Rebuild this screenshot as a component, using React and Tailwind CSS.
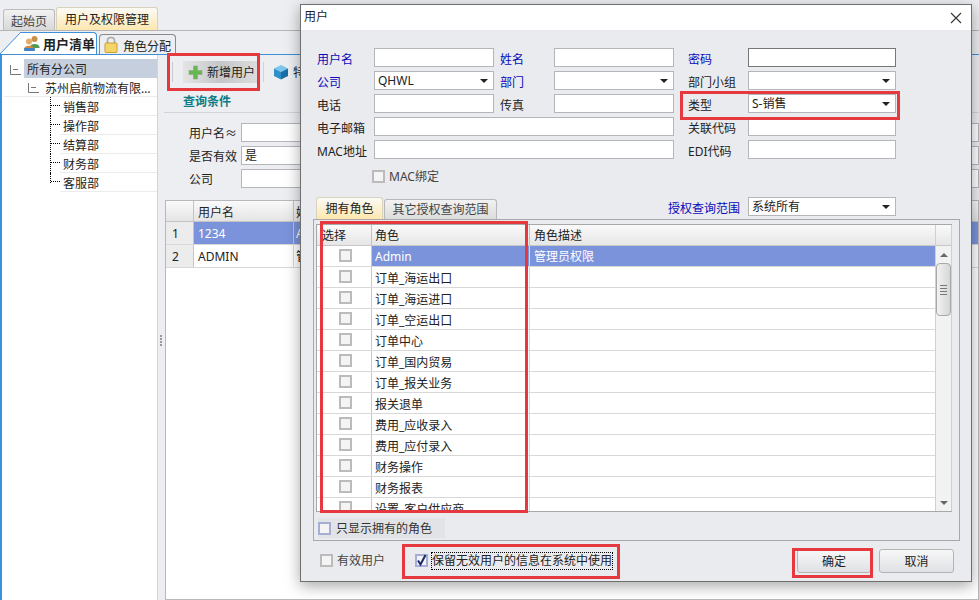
const roles = [
  ['Admin', '管理员权限'],
  ['订单_海运出口', ''],
  ['订单_海运进口', ''],
  ['订单_空运出口', ''],
  ['订单中心', ''],
  ['订单_国内贸易', ''],
  ['订单_报关业务', ''],
  ['报关退单', ''],
  ['费用_应收录入', ''],
  ['费用_应付录入', ''],
  ['财务操作', ''],
  ['财务报表', ''],
  ['设置_客户供应商', ''],
];

const leaves = ['销售部', '操作部', '结算部', '财务部', '客服部'];

function Caret() {
  return <span className="h-0 w-0 border-x-[4px] border-t-[4px] border-x-transparent border-t-[#222]" />;
}

function Field({ children, strong, className = '' }) {
  return (
    <div className={`flex h-[19px] items-center border bg-white px-[3px] pt-px ${strong ? 'border-[#777]' : 'border-[#b4b6ba]'} ${className}`}>
      {children}
    </div>
  );
}

function Select({ value, className = '' }) {
  return (
    <Field className={`justify-between pr-[5px] ${className}`}>
      <span>{value}</span>
      <Caret />
    </Field>
  );
}

function Check({ checked, blue, className = '' }) {
  return (
    <span className={`flex h-[13px] w-[13px] shrink-0 items-center justify-center border-2 ${blue ? 'border-[#a6aed6]' : 'border-[#bbbbbb]'} bg-[#f4f4f4] ${className}`}>
      {checked ? (
        <svg width="13" height="13" viewBox="0 0 13 13" className="-m-[2px]">
          <path d="M3 6.5 L5.5 10.5 L10.5 1" fill="none" stroke="#1c2a66" strokeWidth="2" />
        </svg>
      ) : null}
    </span>
  );
}

function Expander() {
  return (
    <svg width="12" height="12" viewBox="0 0 12 12" className="shrink-0">
      <path d="M0.5 2 V11.5 H11 M3 6.5 H8" fill="none" stroke="#777" />
    </svg>
  );
}

function UsersIcon() {
  return (
    <svg width="17" height="17" viewBox="0 0 17 17" className="shrink-0">
      <circle cx="11.5" cy="4" r="3" fill="#c98f4b" />
      <path d="M7 12 C7 8 16 8 16.5 12 V13 H7 Z" fill="#4f9a52" />
      <circle cx="6" cy="6.5" r="3" fill="#e2ad6a" />
      <path d="M1 14 C1 9.5 11 9.5 11 14 Z" fill="#d9883a" />
      <rect x="1" y="13" width="11" height="3" rx="1" fill="#3f84c9" />
    </svg>
  );
}

function LockIcon() {
  return (
    <svg width="14" height="17" viewBox="0 0 14 17" className="shrink-0">
      <path d="M3.5 8 V4.5 C3.5 0.5 10.5 0.5 10.5 4.5 V8" fill="none" stroke="#a8a8a8" strokeWidth="1.6" />
      <rect x="1" y="7" width="12" height="9.5" rx="1" fill="#f5d567" stroke="#c79f36" />
    </svg>
  );
}

function PlusIcon() {
  return (
    <svg width="15" height="15" viewBox="0 0 15 15" className="shrink-0">
      <path d="M5.5 1 H9.5 V5.5 H14 V9.5 H9.5 V14 H5.5 V9.5 H1 V5.5 H5.5 Z" fill="#65b84f" stroke="#8fa58a" strokeWidth="0.6" />
    </svg>
  );
}

function CubeIcon() {
  return (
    <svg width="16" height="16" viewBox="0 0 16 16" className="shrink-0">
      <path d="M8 1 L15 4.5 L8 8 L1 4.5 Z" fill="#7cc6ec" />
      <path d="M1 4.5 L8 8 V15.5 L1 12 Z" fill="#2f8fc9" />
      <path d="M15 4.5 L8 8 V15.5 L15 12 Z" fill="#1a6ea8" />
    </svg>
  );
}

function Tree() {
  return (
    <div className="w-[157px] shrink-0 border-l-2 border-[#3d8fd8] bg-white pl-[2px] pt-[4px]">
      <div className="flex h-[19px] items-center">
        <span className="ml-[6px] w-[14px]"><Expander /></span>
        <span className="flex h-full flex-1 items-center bg-[#c6cfdd] pl-[3px] pt-[3px]">所有分公司</span>
      </div>
      <div className="flex h-[19px] items-center border-b border-[#ececec]">
        <span className="ml-[24px] w-[17px]"><Expander /></span>
        <span className="whitespace-nowrap pt-[3px]">苏州启航物流有限…</span>
      </div>
      {leaves.map((leaf, i) => (
        <div key={leaf} className="ml-[46px] flex h-[19px]">
          <span className={`w-[10px] border-l border-dotted border-black ${i === leaves.length - 1 ? 'h-[10px]' : ''}`}>
            <span className="block h-[9px] border-b border-dotted border-black" />
          </span>
          <span className="flex flex-1 items-center border-b border-[#ececec] pl-[3px] pt-[3px]">{leaf}</span>
        </div>
      ))}
    </div>
  );
}

function MainPanel() {
  return (
    <div className="flex min-w-0 flex-1 flex-col">
      <div className="flex h-[34px] items-center pl-[5px]">
        <span className="h-[20px] w-[4px] border-x border-[#c9c9c9]" />
        <div className="ml-[10px] flex h-[22px] w-[75px] items-center gap-[4px] bg-gradient-to-r from-[#e4e4e4] via-[#c4c6c8] to-[#dddddd] pl-[5px]">
          <PlusIcon />
          <span className="pt-[2px]">新增用户</span>
        </div>
        <span className="ml-[5px] h-[20px] w-px bg-[#d2d2d2]" />
        <span className="ml-[9px]"><CubeIcon /></span>
        <span className="ml-[4px] pt-[2px]">特</span>
      </div>
      <div className="flex h-[24px] items-center border-b border-[#d4d4d4] pl-[19px] pt-[2px] font-bold text-[#0b7c86]">查询条件</div>
      <div className="flex flex-col gap-[4px] pl-[25px] pt-[10px]">
        {[['用户名≈', ''], ['是否有效', '是'], ['公司', '']].map(([label, value]) => (
          <div key={label} className="flex h-[19px] items-center">
            <span className="w-[52px] pt-[2px]">{label}</span>
            <Field className="flex-1">{value}</Field>
          </div>
        ))}
      </div>
      <div className="ml-px mt-[12px] flex-1 border border-[#b8b8b8] bg-white">
        <div className="flex h-[21px] border-b border-[#c4c4c4] bg-gradient-to-b from-[#fafafa] to-[#e4e4e4]">
          <span className="w-[28px] border-r border-[#c4c4c4]" />
          <span className="flex w-[100px] items-center border-r border-[#c4c4c4] pl-[4px] pt-[3px]">用户名</span>
          <span className="flex items-center pl-[2px] pt-[3px]">姓</span>
        </div>
        <div className="flex h-[23px] border-b border-[#d8d8d8]">
          <span className="flex w-[28px] items-center border-r border-[#c4c4c4] bg-[#ececec] pl-[6px] pt-[2px]">1</span>
          <span className="flex w-[100px] items-center border-r border-[#c4c4c4] bg-[#7b93db] pl-[4px] pt-[2px] text-white">1234</span>
          <span className="flex flex-1 items-center bg-[#7b93db] pl-[2px] pt-[2px] text-white">A</span>
        </div>
        <div className="flex h-[23px] border-b border-[#d8d8d8]">
          <span className="flex w-[28px] items-center border-r border-[#c4c4c4] bg-[#ececec] pl-[6px] pt-[2px]">2</span>
          <span className="flex w-[100px] items-center border-r border-[#d8d8d8] pl-[4px] pt-[2px]">ADMIN</span>
          <span className="flex flex-1 items-center pl-[2px] pt-[2px]">管</span>
        </div>
      </div>
    </div>
  );
}

function RoleGrid() {
  return (
    <div className="ml-[2px] mr-[7px] mt-[4px] flex h-[288px] overflow-hidden border-y border-l border-[#a8a8a8]">
      <div className="min-w-0 flex-1 overflow-hidden bg-white">
        <div className="flex h-[21px] border-b border-[#c8c8c8] bg-gradient-to-b from-[#fafafa] to-[#e6e6e6]">
          <span className="flex w-[55px] items-center border-r border-[#c0c0c0] pl-[5px] pt-[2px]">选择</span>
          <span className="flex w-[158px] items-center border-r border-[#c0c0c0] pl-[3px] pt-[2px]">角色</span>
          <span className="flex flex-1 items-center pl-[4px] pt-[2px]">角色描述</span>
        </div>
        {roles.map(([name, desc], i) => (
          <div key={name} className={`flex h-[21px] border-b border-[#d8d8d8] ${i === 0 ? 'bg-[#7b93db] text-white' : ''}`}>
            <span className="flex w-[55px] items-center justify-center border-r border-[#c8c8c8] bg-white pb-px pl-[2px]"><Check /></span>
            <span className={`flex w-[158px] items-center border-r border-[#d8d8d8] pl-[3px] ${i === 0 ? 'pt-[2px]' : 'pt-[4px]'}`}>{name}</span>
            <span className="flex flex-1 items-center pl-[4px] pt-[2px]">{desc}</span>
          </div>
        ))}
      </div>
      <div className="flex w-[17px] shrink-0 flex-col items-center border-x border-[#d0d0d0] bg-[#f2f2f2]">
        <div className="h-[21px] w-full border-b border-[#c8c8c8] bg-gradient-to-b from-[#fafafa] to-[#e6e6e6]" />
        <div className="flex h-[17px] items-center">
          <span className="h-0 w-0 border-x-[4px] border-b-[4px] border-x-transparent border-b-[#666]" />
        </div>
        <div className="flex h-[53px] w-[15px] flex-col items-center justify-center gap-[2px] rounded-sm border border-[#a8a8a8] bg-gradient-to-r from-[#f2f2f2] to-[#d6d6d6]">
          <span className="h-px w-[7px] bg-[#777]" />
          <span className="h-px w-[7px] bg-[#777]" />
          <span className="h-px w-[7px] bg-[#777]" />
          <span className="h-px w-[7px] bg-[#777]" />
        </div>
        <div className="flex-1" />
        <div className="flex h-[17px] items-center">
          <span className="h-0 w-0 border-x-[4px] border-t-[4px] border-x-transparent border-t-[#666]" />
        </div>
      </div>
    </div>
  );
}

function UserDialog() {
  const blue = 'text-[#0a0ab8]';
  return (
    <div className="absolute left-[300px] top-[4px] flex h-[578px] w-[672px] flex-col border border-[#6e6e6e] bg-[#e9ebef] shadow-[0_4px_14px_rgba(0,0,0,0.35)]">
      <div className="flex h-[25px] shrink-0 items-center justify-between bg-white pl-[3px] pr-[9px]">
        <span className="pb-[2px]">用户</span>
        <svg width="12" height="12" viewBox="0 0 12 12">
          <path d="M1 1 L11 11 M11 1 L1 11" stroke="#333" strokeWidth="1.1" />
        </svg>
      </div>

      <div className="ml-[16px] mt-[18px] grid w-[579px] grid-cols-[57px_120px_60px_120px_74px_148px] items-center gap-y-[4px] [&>span]:pt-[4px] [&>span]:leading-[15px]">
        <span className={blue}>用户名</span>
        <Field />
        <span className={`pl-[6px] ${blue}`}>姓名</span>
        <Field />
        <span className={`pl-[14px] ${blue}`}>密码</span>
        <Field strong />

        <span className={blue}>公司</span>
        <Select value="QHWL" />
        <span className={`pl-[6px] ${blue}`}>部门</span>
        <Select value="" />
        <span className="pl-[14px]">部门小组</span>
        <Select value="" />

        <span>电话</span>
        <Field />
        <span className="pl-[6px]">传真</span>
        <Field />
        <span className="pl-[14px]">类型</span>
        <Select value="S-销售" />

        <span>电子邮箱</span>
        <Field className="col-span-3" />
        <span className="pl-[14px]">关联代码</span>
        <Field />

        <span>MAC地址</span>
        <Field className="col-span-3" />
        <span className="pl-[14px]">EDI代码</span>
        <Field />
      </div>

      <div className="ml-[71px] mt-[10px] flex h-[14px] items-center gap-[4px] text-[#444]">
        <Check />
        <span className="pt-[2px]">MAC绑定</span>
      </div>

      <div className="mt-[14px] flex h-[22px] shrink-0 items-start">
        <div className="ml-[15px] flex h-[22px] w-[67px] items-center justify-center rounded-t-[3px] border border-b-0 border-[#d8d2bc] bg-gradient-to-b from-[#fbfaf5] to-[#fde7ae]">拥有角色</div>
        <div className="ml-px mt-[2px] flex h-[20px] w-[113px] items-center justify-center rounded-t-[3px] border border-b-0 border-[#b8b8b8] bg-gradient-to-b from-[#f2f2f2] to-[#dcdcdc] text-[#444]">其它授权查询范围</div>
        <span className={`ml-auto mr-[8px] mt-[3px] ${blue}`}>授权查询范围</span>
        <Select value="系统所有" className="mr-[75px] w-[148px]" />
      </div>

      <div className="ml-[12px] h-[322px] w-[647px] shrink-0 border border-[#a8a8a8]">
        <RoleGrid />
        <div className="ml-[4px] mt-[6px] flex h-[20px] w-[127px] items-center gap-[5px] bg-[#e2e3e6] text-[#333]">
          <Check blue />
          <span className="pt-[2px]">只显示拥有的角色</span>
        </div>
      </div>

      <div className="mt-[7px] flex h-[25px] shrink-0 items-center pl-[19px] pr-[17px]">
        <Check />
        <span className="ml-[4px] text-[#444]">有效用户</span>
        <Check checked blue className="ml-[30px]" />
        <span className="ml-[3px] border border-dotted border-black leading-[16px]">保留无效用户的信息在系统中使用</span>
        <button type="button" className="ml-auto h-[24px] w-[74px] rounded-[3px] border border-[#b4b4b4] bg-gradient-to-b from-[#f7f7f7] to-[#e0e1e5] pt-[3px]">确定</button>
        <button type="button" className="ml-[8px] h-[24px] w-[75px] rounded-[3px] border border-[#b4b4b4] bg-gradient-to-b from-[#f7f7f7] to-[#e0e1e5] pt-[3px]">取消</button>
      </div>
    </div>
  );
}

export default function App() {
  const mark = 'pointer-events-none absolute border-[3px] border-[#e5393f]';
  return (
    <div className="relative flex h-[600px] w-[979px] flex-col overflow-hidden bg-[#eceef1] font-['Noto_Sans','Noto_Sans_CJK_SC',sans-serif] text-[12px] text-[#222]">
      <div className="flex h-[31px] shrink-0 items-end border-b border-[#b5b5b5] pl-[3px]">
        <div className="flex h-[21px] w-[52px] items-center justify-center rounded-t-[3px] border border-b-0 border-[#bcbcbc] bg-gradient-to-b from-[#f2f2f2] to-[#d8d8d8] pt-[3px] text-[#444]">起始页</div>
        <div className="ml-px flex h-[23px] w-[102px] items-center justify-center rounded-t-[3px] border border-b-0 border-[#d8d2bc] bg-gradient-to-b from-[#fbfaf5] to-[#fde7ae] pt-[2px]">用户及权限管理</div>
      </div>

      <div className="flex h-[24px] shrink-0 items-end border-b border-[#3d8fd8]">
        <svg width="20" height="22" viewBox="0 0 20 22" className="shrink-0">
          <path d="M0 22 L20 1 V22 Z" fill="#ffffff" />
          <path d="M0 22 L20 1" stroke="#3d8fd8" fill="none" />
        </svg>
        <div className="flex h-[22px] w-[77px] items-center gap-[3px] rounded-tr-[4px] border-r border-t border-[#3d8fd8] bg-white pl-[3px] text-[13px] font-bold">
          <UsersIcon />
          <span className="whitespace-nowrap pt-[3px]">用户清单</span>
        </div>
        <div className="ml-[2px] flex h-[20px] w-[77px] items-center gap-[5px] rounded-t-[4px] border border-b-0 border-[#8a8a8a] bg-[#eceef1] pl-[4px]">
          <LockIcon />
          <span className="whitespace-nowrap pt-[4px]">角色分配</span>
        </div>
      </div>

      <div className="flex min-h-0 flex-1">
        <Tree />
        <div className="flex w-[7px] shrink-0 flex-col items-center justify-center gap-px border-l border-[#d4d4d4] bg-[#eceef1] pt-[26px]">
          <span className="h-[2px] w-[2px] bg-[#999]" />
          <span className="h-[2px] w-[2px] bg-[#999]" />
          <span className="h-[2px] w-[2px] bg-[#999]" />
          <span className="h-[2px] w-[2px] bg-[#999]" />
        </div>
        <MainPanel />
      </div>

      <UserDialog />

      <div className={`${mark} left-[167px] top-[53px] h-[38px] w-[93px]`} />
      <div className={`${mark} left-[680px] top-[91px] h-[29px] w-[220px]`} />
      <div className={`${mark} left-[320px] top-[221px] h-[292px] w-[208px]`} />
      <div className={`${mark} left-[402px] top-[544px] h-[35px] w-[218px]`} />
      <div className={`${mark} left-[792px] top-[548px] h-[30px] w-[81px]`} />
    </div>
  );
}
